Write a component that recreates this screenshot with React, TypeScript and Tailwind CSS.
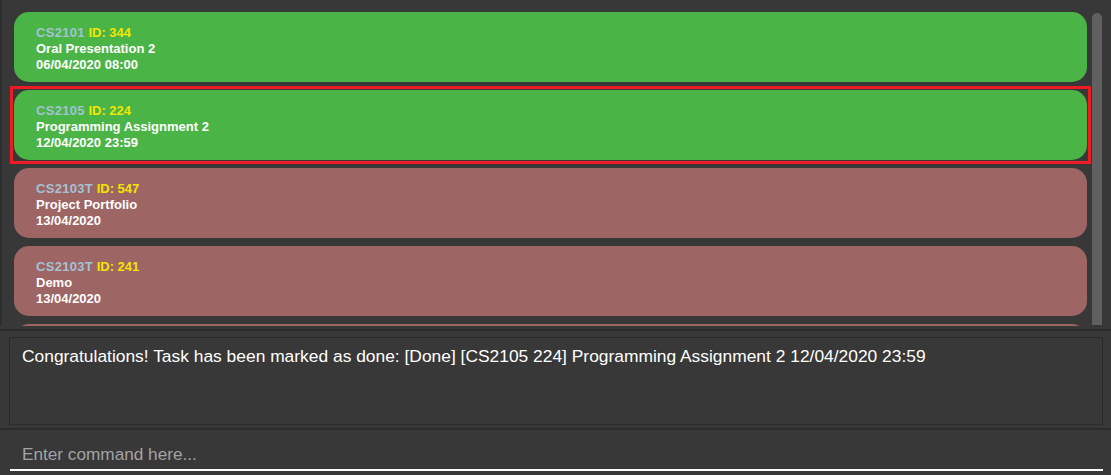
import React from 'react';

interface Task {
  module: string;
  id: number;
  name: string;
  date: string;
  done: boolean;
  selected?: boolean;
}

const tasks: Task[] = [
  { module: 'CS2101', id: 344, name: 'Oral Presentation 2', date: '06/04/2020 08:00', done: true },
  { module: 'CS2105', id: 224, name: 'Programming Assignment 2', date: '12/04/2020 23:59', done: true, selected: true },
  { module: 'CS2103T', id: 547, name: 'Project Portfolio', date: '13/04/2020', done: false },
  { module: 'CS2103T', id: 241, name: 'Demo', date: '13/04/2020', done: false },
  { module: 'CS2103T', id: 102, name: 'Final Exam', date: '20/04/2020', done: false },
];

function TaskCard({ task }: { task: Task }) {
  return (
    <div
      className={`h-[78px] shrink-0 border-[3px] p-px ${
        task.selected ? 'border-[#ed1c24]' : 'border-transparent'
      }`}
    >
      <div
        className={`h-[70px] rounded-[15px] pl-[22px] pt-[13px] text-[13px] font-bold leading-[16px] text-white ${
          task.done ? 'bg-[#4bb446]' : 'bg-[#9e6565]'
        }`}
      >
        <div>
          <span className="tracking-[0.3px] text-[#a3c3d3]">{task.module}</span>{' '}
          <span className="text-[#f2e600]">ID: {task.id}</span>
        </div>
        <div>{task.name}</div>
        <div>{task.date}</div>
      </div>
    </div>
  );
}

export default function App() {
  return (
    <div
      className="flex h-[475px] w-[1111px] flex-col overflow-hidden bg-[#383838]"
      style={{ fontFamily: '"Liberation Sans", Arial, sans-serif' }}
    >
      {/* task list */}
      <div className="flex h-[326px] shrink-0 border-l-2 border-[#2f2f2f]">
        <div className="flex flex-1 flex-col overflow-hidden pl-[8px] pt-[8px]">
          {tasks.map((t) => (
            <TaskCard key={t.id} task={t} />
          ))}
        </div>
        <div className="w-[20px] shrink-0 pl-px pt-[13px]">
          <div className="h-[312px] w-[10px] rounded-t-[5px] bg-[#606060]" />
        </div>
      </div>

      <div className="h-[5px] shrink-0 border-b-2 border-[#2b2b2b]" />

      {/* result display */}
      <div className="h-[99px] shrink-0 border-b-2 border-[#2b2b2b] pl-[9px] pr-[8px] pt-[6px]">
        <div className="h-[88px] border border-[#2a2a2a] pl-[12px] pt-[6px] text-[17.4px] leading-[24px] text-white">
          <p>
            Congratulations! Task has been marked as done: [Done] [CS2105 224] Programming Assignment 2 12/04/2020 23:59
          </p>
        </div>
      </div>

      {/* command box */}
      <div className="shrink-0 pl-[10px] pr-[8px] pt-[13px]">
        <div className="border-b-2 border-white pb-[4px] pl-[12px] text-[17.2px] leading-[22px] text-[#a3a3a3]">
          Enter command here...
        </div>
      </div>
    </div>
  );
}
